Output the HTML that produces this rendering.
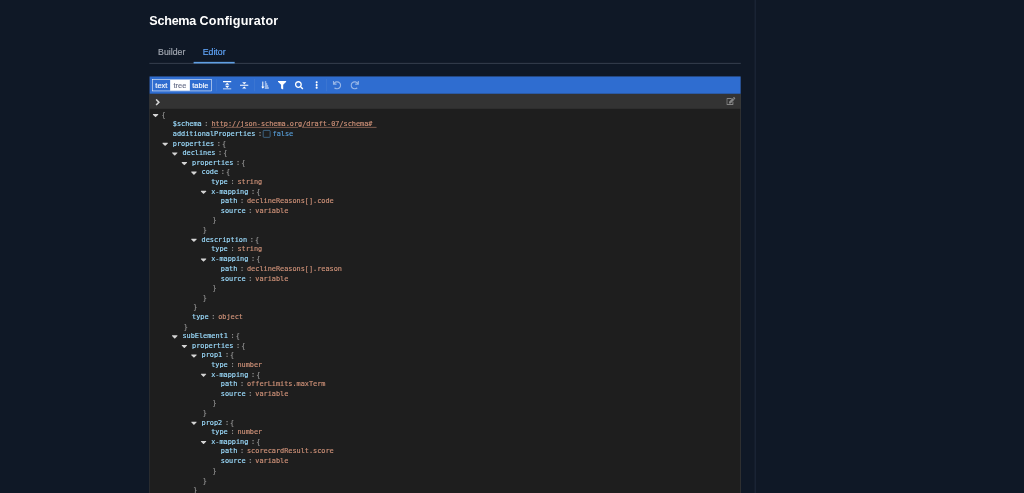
<!DOCTYPE html>
<html lang="en">
<head>
<meta charset="utf-8">
<title>Schema Configurator</title>
<style>
html,body{margin:0;padding:0;background:#0f1826;}
body{width:1024px;height:493px;overflow:hidden;position:relative;}
#root{position:absolute;left:0;top:0;width:1920px;height:925px;transform:scale(0.533333);transform-origin:0 0;background:#0f1826;font-family:"Liberation Sans",Arial,sans-serif;color:#fff;overflow:hidden;filter:blur(0.7px);}
.vline{position:absolute;left:1415px;top:0;width:2px;height:925px;background:#1e283a;}
h1{position:absolute;left:280px;top:23.1px;margin:0;font-size:23.6px;line-height:30px;font-weight:bold;color:#fff;letter-spacing:0;}
.tabs{position:absolute;left:280px;top:78px;width:1109px;height:40.4px;border-bottom:1px solid #56606f;}
.tab{position:absolute;top:0;height:40px;line-height:38.6px;font-size:16.4px;color:#a3a9b3;text-align:center;-webkit-text-stroke:0.3px;}
.tab.tb{left:0;width:84px;}
.tab.te{left:83px;width:77px;height:37.8px;color:#60a5fa;border-bottom:3.2px solid #5f9fe4;}
.editor{position:absolute;left:280px;top:143px;width:1109px;height:800px;background:#1e1e1e;overflow:hidden;}
.menu{position:absolute;left:0;top:0;right:0;height:33px;background:#2f6dd0;}
.grp{position:absolute;left:5px;top:6px;height:20px;border:1px solid #fff;display:flex;font-size:14px;line-height:20px;color:#fff;-webkit-text-stroke:0.25px;}
.grp span{display:block;text-align:center;}
.grp span.sel{background:#fff;color:#666d88;}
.msep{position:absolute;top:5px;width:1px;height:23px;background:#467cd2;}
.ic{position:absolute;display:block;}
.edge{position:absolute;top:33px;bottom:0;width:1px;background:#4a4a4a;z-index:3;}
.nav{position:absolute;left:0;top:33px;right:0;height:28px;background:#333;}
.tree{position:absolute;left:0;top:62.8px;right:0;bottom:0;font-family:"DejaVu Sans Mono","Liberation Mono",monospace;font-size:12.87px;line-height:18px;color:#d4d4d4;-webkit-text-stroke:0.3px;}
.row{height:18.06px;display:flex;align-items:center;white-space:pre;padding-left:0;margin-left:3px;}
.ex{display:inline-block;width:18px;height:18px;flex:none;position:relative;}
.ex svg{position:absolute;}
.k{color:#9cdcfe;padding:0 5px;}
.sep{color:#949494;}
.d{color:#949494;}
.ob{padding:0 5px 0 2px;}
.cb{padding:0 5px 0 7.4px;}
.v{padding:0 5px 0 5.4px;}
.s,.url{color:#ce9178;}
.url{text-decoration:underline;}
.b{color:#569cd6;}
.chk{display:inline-block;width:14px;height:14px;border:1.5px solid #569cd6;border-radius:2px;margin-left:1px;margin-right:-1px;box-sizing:border-box;flex:none;}
</style>
</head>
<body>
<div id="root">
  <div class="vline"></div>
  <h1><span style="letter-spacing:-0.49px">Schema</span> <span style="letter-spacing:0.42px">Configurator</span></h1>
  <div class="tabs">
    <div class="tab tb">Builder</div>
    <div class="tab te">Editor</div>
  </div>
  <div class="editor">
    <div class="menu">
      <div class="grp"><span style="width:33.2px">text</span><span class="sel" style="width:36.5px">tree</span><span style="width:40.1px">table</span></div>
      <svg class="ic" viewBox="0 0 512 512" style="left:138.00px;top:8.50px;width:16.00px;height:16px"><path fill="#fff" d="M 0,448 V 512 h 512 v -64 z M 0,0 V 64 H 512 V 0 Z M 256,96 128,224 h 256 z M 256,416 384,288 H 128 Z"/></svg>
      <svg class="ic" viewBox="0 0 512 512" style="left:170.00px;top:8.50px;width:16.00px;height:16px"><path fill="#fff" d="m 0,224 v 64 h 512 v -64 z M 256,192 384,64 H 128 Z M 256,320 128,448 h 256 z"/></svg>
      <svg class="ic" viewBox="0 0 512 512" style="left:209.60px;top:9.10px;width:14.80px;height:14.8px"><path fill="#fff" d="M240 96h64a16 16 0 0 0 16-16V48a16 16 0 0 0-16-16h-64a16 16 0 0 0-16 16v32a16 16 0 0 0 16 16zm0 128h128a16 16 0 0 0 16-16v-32a16 16 0 0 0-16-16H240a16 16 0 0 0-16 16v32a16 16 0 0 0 16 16zm256 192H240a16 16 0 0 0-16 16v32a16 16 0 0 0 16 16h256a16 16 0 0 0 16-16v-32a16 16 0 0 0-16-16zm-256-64h192a16 16 0 0 0 16-16v-32a16 16 0 0 0-16-16H240a16 16 0 0 0-16 16v32a16 16 0 0 0 16 16zm-64 0h-48V48a16 16 0 0 0-16-16H80a16 16 0 0 0-16 16v304H16c-14.190 0-21.370 17.240-11.290 27.310l80 96a16 16 0 0 0 22.620 0l80-96C197.350 369.260 190.220 352 176 352z"/></svg>
      <svg class="ic" viewBox="0 0 512 512" style="left:241.00px;top:8.50px;width:16.00px;height:16px"><path fill="#fff" d="M487.976 0H24.028C2.710 0-8.047 25.866 7.058 40.971L192 225.941V432c0 7.831 3.821 15.170 10.237 19.662l80 55.980C298.020 518.690 320 507.493 320 487.980V225.941l184.947-184.970C520.021 25.896 509.338 0 487.976 0z"/></svg>
      <svg class="ic" viewBox="0 0 512 512" style="left:273.00px;top:8.50px;width:16.00px;height:16px"><path fill="#fff" d="M505 442.700L405.300 343c-4.500-4.500-10.600-7-17-7H372c27.600-35.300 44-79.700 44-128C416 93.100 322.900 0 208 0S0 93.100 0 208s93.100 208 208 208c48.300 0 92.700-16.400 128-44v16.300c0 6.400 2.500 12.500 7 17l99.700 99.700c9.400 9.400 24.600 9.400 33.900 0l28.300-28.300c9.400-9.400 9.400-24.600 .1-34zM208 336c-70.700 0-128-57.200-128-128 0-70.700 57.200-128 128-128 70.700 0 128 57.200 128 128 0 70.700-57.200 128-128 128z"/></svg>
      <svg class="ic" viewBox="0 0 192 512" style="left:310.73px;top:9.10px;width:5.55px;height:14.8px"><path fill="#fff" d="M96 184c39.800 0 72 32.200 72 72s-32.200 72-72 72-72-32.200-72-72 32.200-72 72-72zM24 80c0 39.800 32.200 72 72 72s72-32.200 72-72S135.800 8 96 8 24 40.200 24 80zm0 352c0 39.800 32.200 72 72 72s72-32.200 72-72-32.200-72-72-72-72 32.200-72 72z"/></svg>
      <svg class="ic" viewBox="0 0 512 512" style="left:344.00px;top:8.50px;width:16.00px;height:16px;opacity:0.5"><path fill="#fff" d="M212.333 224.333H12c-6.627 0-12-5.373-12-12V12C0 5.373 5.373 0 12 0h48c6.627 0 12 5.373 12 12v78.112C117.773 39.279 184.260 7.470 258.175 8.007c136.906 .994 246.448 111.623 246.157 248.532C504.041 393.258 393.120 504 256.333 504c-64.089 0-122.496-24.313-166.510-64.215-5.099-4.622-5.334-12.554-.467-17.420l33.967-33.967c4.474-4.474 11.662-4.717 16.401-.525C170.760 415.336 211.580 432 256.333 432c97.268 0 176-78.716 176-176 0-97.267-78.716-176-176-176-58.496 0-110.280 28.476-142.274 72.333h98.274c6.627 0 12 5.373 12 12v48c0 6.627-5.373 12-12 12z"/></svg>
      <svg class="ic" viewBox="0 0 512 512" style="left:377.00px;top:8.50px;width:16.00px;height:16px;opacity:0.5"><path fill="#fff" d="M500.333 0h-47.411c-6.853 0-12.314 5.729-11.986 12.574l3.966 82.759C399.416 41.899 331.672 8 256.001 8 119.340 8 7.899 119.526 8 256.187 8.101 393.068 119.096 504 256 504c63.926 0 122.202-24.187 166.178-63.908 5.113-4.618 5.354-12.561 .482-17.433l-33.971-33.971c-4.466-4.466-11.640-4.717-16.380-.543C341.308 415.448 300.606 432 256 432c-97.267 0-176-78.716-176-176 0-97.267 78.716-176 176-176 60.892 0 114.506 30.858 146.099 77.800l-101.525-4.865c-6.845-.328-12.574 5.133-12.574 11.986v47.411c0 6.627 5.373 12 12 12h200.333c6.627 0 12-5.373 12-12V12c0-6.627-5.373-12-12-12z"/></svg>
      <div class="msep" style="left:125.6px"></div>
      <div class="msep" style="left:197.3px"></div>
      <div class="msep" style="left:332.3px"></div>
    </div>
    <div class="edge" style="left:0"></div><div class="edge" style="right:0"></div>
    <div class="nav"><svg class="ic" viewBox="0 0 256 512" style="left:11.43px;top:5.55px;width:9.75px;height:19.5px"><path fill="#d4d4d4" d="M224.300 273l-136 136c-9.400 9.400-24.600 9.400-33.900 0l-22.600-22.600c-9.400-9.400-9.400-24.600 0-33.900l96.400-96.400-96.400-96.400c-9.400-9.400-9.400-24.600 0-33.900L54.300 103c9.400-9.400 24.600-9.400 33.900 0l136 136c9.500 9.400 9.500 24.600 .1 34z"/></svg><svg class="ic" viewBox="0 0 576 512" style="left:1082.06px;top:6.10px;width:16.88px;height:15px"><path fill="#858585" d="M402.600 83.200l90.200 90.200c3.800 3.800 3.800 10 0 13.800L274.400 405.600l-92.800 10.300c-12.400 1.400-22.900-9.100-21.500-21.500l10.300-92.800L388.800 83.200c3.800-3.800 10-3.800 13.800 0zm162-22.900l-48.800-48.800c-15.200-15.200-39.900-15.200-55.200 0l-35.400 35.400c-3.800 3.800-3.800 10 0 13.800l90.200 90.200c3.800 3.800 10 3.800 13.800 0l35.400-35.400c15.200-15.300 15.200-40 0-55.200zM384 346.200V448H64V128h229.800c3.200 0 6.200-1.300 8.500-3.500l40-40c7.600-7.600 2.200-20.500-8.500-20.500H48C21.500 64 0 85.500 0 112v352c0 26.500 21.500 48 48 48h352c26.500 0 48-21.500 48-48V306.200c0-10.700-12.900-16-20.500-8.500l-40 40c-2.200 2.300-3.500 5.300-3.500 8.500z"/></svg></div>
    <div class="tree">
<div class="row" style="padding-left:0px"><span class="ex"><svg class="ci" viewBox="0 0 320 512" style="left:3.28px;top:1.00px;width:11.25px;height:18px"><path fill="#d4d4d4" d="M31.300 192h257.300c17.800 0 26.700 21.500 14.100 34.100L174.100 354.800c-7.800 7.800-20.500 7.800-28.300 0L17.200 226.100C4.600 213.500 13.500 192 31.300 192z"/></svg></span><span class="d ob">{</span></div>
<div class="row" style="padding-left:18px"><span class="ex"></span><span class="k">$schema</span><span class="sep">:</span><span class="v url">http://json-schema.org/draft-07/schema# </span></div>
<div class="row" style="padding-left:18px"><span class="ex"></span><span class="k">additionalProperties</span><span class="sep">:</span><span class="chk"></span><span class="v b">false</span></div>
<div class="row" style="padding-left:18px"><span class="ex"><svg class="ci" viewBox="0 0 320 512" style="left:3.28px;top:1.00px;width:11.25px;height:18px"><path fill="#d4d4d4" d="M31.300 192h257.300c17.800 0 26.700 21.500 14.100 34.100L174.100 354.800c-7.800 7.800-20.500 7.800-28.300 0L17.200 226.100C4.600 213.500 13.500 192 31.300 192z"/></svg></span><span class="k">properties</span><span class="sep">:</span><span class="d ob">{</span></div>
<div class="row" style="padding-left:36px"><span class="ex"><svg class="ci" viewBox="0 0 320 512" style="left:3.28px;top:1.00px;width:11.25px;height:18px"><path fill="#d4d4d4" d="M31.300 192h257.300c17.800 0 26.700 21.500 14.100 34.100L174.100 354.800c-7.800 7.800-20.500 7.800-28.300 0L17.200 226.100C4.600 213.500 13.500 192 31.300 192z"/></svg></span><span class="k">declines</span><span class="sep">:</span><span class="d ob">{</span></div>
<div class="row" style="padding-left:54px"><span class="ex"><svg class="ci" viewBox="0 0 320 512" style="left:3.28px;top:1.00px;width:11.25px;height:18px"><path fill="#d4d4d4" d="M31.300 192h257.300c17.800 0 26.700 21.500 14.100 34.100L174.100 354.800c-7.800 7.800-20.500 7.800-28.300 0L17.200 226.100C4.600 213.500 13.500 192 31.300 192z"/></svg></span><span class="k">properties</span><span class="sep">:</span><span class="d ob">{</span></div>
<div class="row" style="padding-left:72px"><span class="ex"><svg class="ci" viewBox="0 0 320 512" style="left:3.28px;top:1.00px;width:11.25px;height:18px"><path fill="#d4d4d4" d="M31.300 192h257.300c17.800 0 26.700 21.500 14.100 34.100L174.100 354.800c-7.800 7.800-20.500 7.800-28.300 0L17.200 226.100C4.600 213.500 13.500 192 31.300 192z"/></svg></span><span class="k">code</span><span class="sep">:</span><span class="d ob">{</span></div>
<div class="row" style="padding-left:90px"><span class="ex"></span><span class="k">type</span><span class="sep">:</span><span class="v s">string</span></div>
<div class="row" style="padding-left:90px"><span class="ex"><svg class="ci" viewBox="0 0 320 512" style="left:3.28px;top:1.00px;width:11.25px;height:18px"><path fill="#d4d4d4" d="M31.300 192h257.300c17.800 0 26.700 21.500 14.100 34.100L174.100 354.800c-7.800 7.800-20.500 7.800-28.300 0L17.200 226.100C4.600 213.500 13.500 192 31.300 192z"/></svg></span><span class="k">x-mapping</span><span class="sep">:</span><span class="d ob">{</span></div>
<div class="row" style="padding-left:108px"><span class="ex"></span><span class="k">path</span><span class="sep">:</span><span class="v s">declineReasons[].code</span></div>
<div class="row" style="padding-left:108px"><span class="ex"></span><span class="k">source</span><span class="sep">:</span><span class="v s">variable</span></div>
<div class="row" style="padding-left:90px"><span class="ex"></span><span class="d cb">}</span></div>
<div class="row" style="padding-left:72px"><span class="ex"></span><span class="d cb">}</span></div>
<div class="row" style="padding-left:72px"><span class="ex"><svg class="ci" viewBox="0 0 320 512" style="left:3.28px;top:1.00px;width:11.25px;height:18px"><path fill="#d4d4d4" d="M31.300 192h257.300c17.800 0 26.700 21.500 14.100 34.100L174.100 354.800c-7.800 7.800-20.500 7.800-28.300 0L17.200 226.100C4.600 213.500 13.500 192 31.300 192z"/></svg></span><span class="k">description</span><span class="sep">:</span><span class="d ob">{</span></div>
<div class="row" style="padding-left:90px"><span class="ex"></span><span class="k">type</span><span class="sep">:</span><span class="v s">string</span></div>
<div class="row" style="padding-left:90px"><span class="ex"><svg class="ci" viewBox="0 0 320 512" style="left:3.28px;top:1.00px;width:11.25px;height:18px"><path fill="#d4d4d4" d="M31.300 192h257.300c17.800 0 26.700 21.500 14.100 34.100L174.100 354.800c-7.800 7.800-20.500 7.800-28.300 0L17.200 226.100C4.600 213.500 13.500 192 31.300 192z"/></svg></span><span class="k">x-mapping</span><span class="sep">:</span><span class="d ob">{</span></div>
<div class="row" style="padding-left:108px"><span class="ex"></span><span class="k">path</span><span class="sep">:</span><span class="v s">declineReasons[].reason</span></div>
<div class="row" style="padding-left:108px"><span class="ex"></span><span class="k">source</span><span class="sep">:</span><span class="v s">variable</span></div>
<div class="row" style="padding-left:90px"><span class="ex"></span><span class="d cb">}</span></div>
<div class="row" style="padding-left:72px"><span class="ex"></span><span class="d cb">}</span></div>
<div class="row" style="padding-left:54px"><span class="ex"></span><span class="d cb">}</span></div>
<div class="row" style="padding-left:54px"><span class="ex"></span><span class="k">type</span><span class="sep">:</span><span class="v s">object</span></div>
<div class="row" style="padding-left:36px"><span class="ex"></span><span class="d cb">}</span></div>
<div class="row" style="padding-left:36px"><span class="ex"><svg class="ci" viewBox="0 0 320 512" style="left:3.28px;top:1.00px;width:11.25px;height:18px"><path fill="#d4d4d4" d="M31.300 192h257.300c17.800 0 26.700 21.500 14.100 34.100L174.100 354.800c-7.800 7.800-20.500 7.800-28.300 0L17.200 226.100C4.600 213.500 13.500 192 31.300 192z"/></svg></span><span class="k">subElement1</span><span class="sep">:</span><span class="d ob">{</span></div>
<div class="row" style="padding-left:54px"><span class="ex"><svg class="ci" viewBox="0 0 320 512" style="left:3.28px;top:1.00px;width:11.25px;height:18px"><path fill="#d4d4d4" d="M31.300 192h257.300c17.800 0 26.700 21.500 14.100 34.100L174.100 354.800c-7.800 7.800-20.500 7.800-28.300 0L17.200 226.100C4.600 213.500 13.500 192 31.300 192z"/></svg></span><span class="k">properties</span><span class="sep">:</span><span class="d ob">{</span></div>
<div class="row" style="padding-left:72px"><span class="ex"><svg class="ci" viewBox="0 0 320 512" style="left:3.28px;top:1.00px;width:11.25px;height:18px"><path fill="#d4d4d4" d="M31.300 192h257.300c17.800 0 26.700 21.500 14.100 34.100L174.100 354.800c-7.800 7.800-20.500 7.800-28.300 0L17.200 226.100C4.600 213.500 13.500 192 31.300 192z"/></svg></span><span class="k">prop1</span><span class="sep">:</span><span class="d ob">{</span></div>
<div class="row" style="padding-left:90px"><span class="ex"></span><span class="k">type</span><span class="sep">:</span><span class="v s">number</span></div>
<div class="row" style="padding-left:90px"><span class="ex"><svg class="ci" viewBox="0 0 320 512" style="left:3.28px;top:1.00px;width:11.25px;height:18px"><path fill="#d4d4d4" d="M31.300 192h257.300c17.800 0 26.700 21.500 14.100 34.100L174.100 354.800c-7.800 7.800-20.500 7.800-28.300 0L17.200 226.100C4.600 213.500 13.500 192 31.300 192z"/></svg></span><span class="k">x-mapping</span><span class="sep">:</span><span class="d ob">{</span></div>
<div class="row" style="padding-left:108px"><span class="ex"></span><span class="k">path</span><span class="sep">:</span><span class="v s">offerLimits.maxTerm</span></div>
<div class="row" style="padding-left:108px"><span class="ex"></span><span class="k">source</span><span class="sep">:</span><span class="v s">variable</span></div>
<div class="row" style="padding-left:90px"><span class="ex"></span><span class="d cb">}</span></div>
<div class="row" style="padding-left:72px"><span class="ex"></span><span class="d cb">}</span></div>
<div class="row" style="padding-left:72px"><span class="ex"><svg class="ci" viewBox="0 0 320 512" style="left:3.28px;top:1.00px;width:11.25px;height:18px"><path fill="#d4d4d4" d="M31.300 192h257.300c17.800 0 26.700 21.500 14.100 34.100L174.100 354.800c-7.800 7.800-20.500 7.800-28.300 0L17.200 226.100C4.600 213.500 13.500 192 31.300 192z"/></svg></span><span class="k">prop2</span><span class="sep">:</span><span class="d ob">{</span></div>
<div class="row" style="padding-left:90px"><span class="ex"></span><span class="k">type</span><span class="sep">:</span><span class="v s">number</span></div>
<div class="row" style="padding-left:90px"><span class="ex"><svg class="ci" viewBox="0 0 320 512" style="left:3.28px;top:1.00px;width:11.25px;height:18px"><path fill="#d4d4d4" d="M31.300 192h257.300c17.800 0 26.700 21.500 14.100 34.100L174.100 354.800c-7.800 7.800-20.500 7.800-28.300 0L17.200 226.100C4.600 213.500 13.500 192 31.300 192z"/></svg></span><span class="k">x-mapping</span><span class="sep">:</span><span class="d ob">{</span></div>
<div class="row" style="padding-left:108px"><span class="ex"></span><span class="k">path</span><span class="sep">:</span><span class="v s">scorecardResult.score</span></div>
<div class="row" style="padding-left:108px"><span class="ex"></span><span class="k">source</span><span class="sep">:</span><span class="v s">variable</span></div>
<div class="row" style="padding-left:90px"><span class="ex"></span><span class="d cb">}</span></div>
<div class="row" style="padding-left:72px"><span class="ex"></span><span class="d cb">}</span></div>
<div class="row" style="padding-left:54px"><span class="ex"></span><span class="d cb">}</span></div>
<div class="row" style="padding-left:36px"><span class="ex"></span><span class="d cb">}</span></div>
    </div>
  </div>
</div>
</body>
</html>
